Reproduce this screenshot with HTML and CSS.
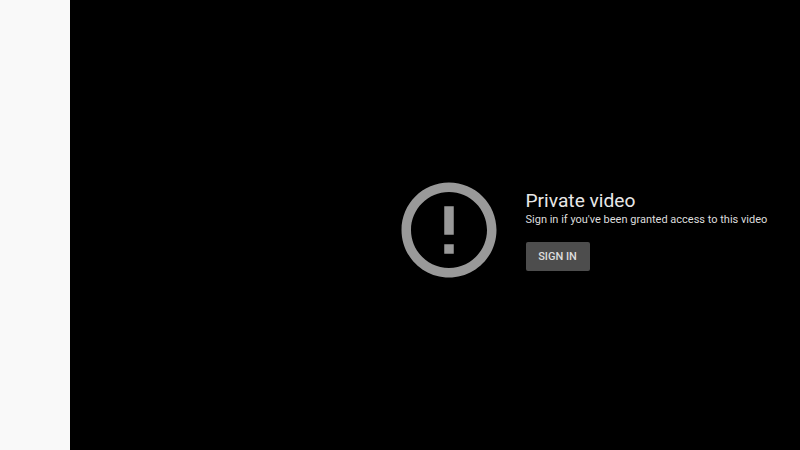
FILE: index.html
```html
<!DOCTYPE html>
<html lang="en">
<head>
<meta charset="utf-8">
<title>Private video</title>
<link rel="stylesheet" href="styles.css">
</head>
<body>
<div class="page">
  <aside class="sidebar"></aside>
  <main class="player">
    <svg class="icon" viewBox="0 0 24 24" aria-hidden="true">
      <path d="M11 15h2v2h-2zm0-8h2v6h-2zm.99-5C6.47 2 2 6.48 2 12s4.47 10 9.99 10C17.52 22 22 17.52 22 12S17.52 2 11.99 2zM12 20c-4.42 0-8-3.58-8-8s3.58-8 8-8 8 3.58 8 8-3.58 8-8 8z"/>
    </svg>
    <div class="message">
      <div class="title">Private video</div>
      <div class="subtitle">Sign in if you've been granted access to this video</div>
      <button class="signin">SIGN IN</button>
    </div>
  </main>
</div>
</body>
</html>
```
FILE: styles.css
```css
html, body {
  margin: 0;
  padding: 0;
  height: 100%;
  overflow: hidden;
  font-family: Roboto, "Liberation Sans", sans-serif;
}
.page {
  display: flex;
  width: 800px;
  height: 450px;
}
.sidebar {
  width: 70px;
  flex: none;
  background: #f9f9f9;
}
.player {
  flex: 1;
  display: flex;
  align-items: flex-start;
  background: #000;
  padding: 172.8px 0 0 321.5px;
  box-sizing: border-box;
}
.icon {
  width: 114px;
  height: 114px;
  flex: none;
  fill: #999;
}
.message {
  margin: 16.6px 0 0 20px;
  display: flex;
  flex-direction: column;
  align-items: flex-start;
}
.title {
  font-size: 19.2px;
  line-height: 23px;
  color: #e8e8e8;
}
.subtitle {
  font-size: 11px;
  line-height: 15px;
  color: #ddd;
  white-space: nowrap;
}
.signin {
  margin-top: 14.6px;
  width: 64px;
  height: 29px;
  padding: 0;
  border: 0;
  border-radius: 2px;
  background: #4d4d4d;
  color: #ddd;
  font: 500 11px Roboto, "Liberation Sans", sans-serif;
}
```
